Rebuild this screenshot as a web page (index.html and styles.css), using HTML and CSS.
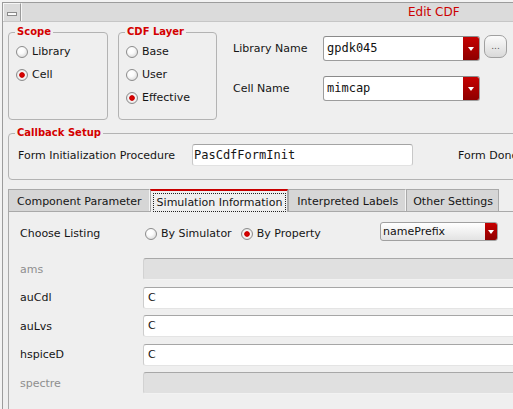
FILE: index.html
```html
<!DOCTYPE html>
<html>
<head>
<meta charset="utf-8">
<title>Edit CDF</title>
<link rel="stylesheet" href="styles.css">
</head>
<body>
<div class="window">
  <div class="titlebar">
    <div class="sysbtn"><span class="sysbar"></span></div>
    <div class="title">Edit CDF</div>
  </div>
  <div class="content">
    <div class="top">
      <fieldset class="group scope">
        <legend>Scope</legend>
        <div class="radio-list">
          <div class="radio-item"><span class="radio"></span>Library</div>
          <div class="radio-item"><span class="radio on"></span>Cell</div>
        </div>
      </fieldset>
      <fieldset class="group layer">
        <legend>CDF Layer</legend>
        <div class="radio-list">
          <div class="radio-item"><span class="radio"></span>Base</div>
          <div class="radio-item"><span class="radio"></span>User</div>
          <div class="radio-item"><span class="radio on"></span>Effective</div>
        </div>
      </fieldset>
      <div class="names">
        <div class="name-row">
          <span class="name-label">Library Name</span>
          <div class="combo"><span class="combo-text">gpdk045</span><span class="combo-btn"></span></div>
          <span class="dots">...</span>
        </div>
        <div class="name-row">
          <span class="name-label">Cell Name</span>
          <div class="combo"><span class="combo-text">mimcap</span><span class="combo-btn"></span></div>
        </div>
      </div>
    </div>

    <fieldset class="group callback">
      <legend>Callback Setup</legend>
      <div class="cb-row">
        <span class="cb-label">Form Initialization Procedure</span>
        <div class="cb-field">PasCdfFormInit</div>
        <span class="cb-label2">Form Done Procedure</span>
      </div>
    </fieldset>

    <div class="tabs">
      <div class="tab">Component Parameter</div>
      <div class="tab active"><span class="focus">Simulation Information</span></div>
      <div class="tab">Interpreted Labels</div>
      <div class="tab last">Other Settings</div>
    </div>

    <div class="panel">
      <div class="listing">
        <span class="listing-label">Choose Listing</span>
        <div class="radio-item inline"><span class="radio"></span>By Simulator</div>
        <div class="radio-item inline second"><span class="radio on"></span>By Property</div>
        <div class="combo small"><span class="combo-text sans">namePrefix</span><span class="combo-btn"></span></div>
      </div>
      <div class="props">
        <span class="prop-label disabled">ams</span>
        <div class="prop-field disabled"></div>
        <span class="prop-label">auCdl</span>
        <div class="prop-field">C</div>
        <span class="prop-label">auLvs</span>
        <div class="prop-field">C</div>
        <span class="prop-label">hspiceD</span>
        <div class="prop-field">C</div>
        <span class="prop-label disabled">spectre</span>
        <div class="prop-field disabled"></div>
      </div>
    </div>
  </div>
</div>
</body>
</html>
```

FILE: styles.css
```css
* { box-sizing: border-box; }

html, body {
  margin: 0;
  padding: 0;
}

body {
  width: 513px;
  height: 409px;
  overflow: hidden;
  background: #f3f3f3;
  font-family: "DejaVu Sans", sans-serif;
  font-size: 11px;
  color: #151515;
}

.window {
  margin: 2px 0 0 2px;
  width: 900px;
  height: 430px;
  border-left: 1px solid #9c9c9c;
  border-top: 1px solid #9c9c9c;
  background: #efefef;
}

/* title bar */
.titlebar {
  display: flex;
  height: 19px;
  background: #dbdbdb;
  border-bottom: 1px solid #c6c6c6;
}

.sysbtn {
  width: 18px;
  height: 18px;
  border-top: 1px solid #f6f6f6;
  border-left: 1px solid #f6f6f6;
  border-right: 1px solid #9a9a9a;
  display: flex;
  justify-content: center;
  padding-top: 8px;
}

.sysbar {
  width: 10px;
  height: 4px;
  border: 1px solid #8a8a8a;
  background: #fafafa;
}

.title {
  border-left: 1px solid #f6f6f6;
  padding-left: 386px;
  color: #cc0000;
  font-size: 12px;
  line-height: 19px;
}

/* main content */
.content {
  padding: 4px 0 0 5px;
}

.top {
  display: flex;
  align-items: flex-start;
}

.group {
  margin: 0;
  border: 1px solid #b3b3b3;
  border-radius: 4px;
  padding: 0 0 0 7px;
  min-width: 0;
}

.group legend {
  margin-left: -1px;
  padding: 0 2px;
  font-weight: bold;
  font-size: 10px;
  line-height: 12px;
  color: #d40000;
}

.group.scope {
  width: 100px;
  height: 94px;
}

.group.layer {
  width: 99px;
  height: 94px;
  margin-left: 10px;
}

.radio-list {
  padding-top: 2px;
}

.radio-item {
  display: flex;
  align-items: center;
  height: 23px;
}

.radio {
  flex: none;
  width: 12px;
  height: 12px;
  margin-right: 4px;
  border-radius: 50%;
  border: 1px solid #8c8c8c;
  background: radial-gradient(circle at 40% 35%, #ffffff 0, #fbfbfb 35%, #cfcfcf 100%);
}

.radio.on {
  background: radial-gradient(circle at 50% 50%, #e00000 0, #c80000 2.4px, #ffffff 3.2px, #f8f8f8 45%, #cfcfcf 100%);
}

/* library / cell names */
.names {
  margin-left: 16px;
  padding-top: 10px;
  display: flex;
  flex-direction: column;
  gap: 15px;
}

.name-row {
  display: flex;
  align-items: center;
  height: 25px;
}

.name-label {
  width: 90px;
}

.combo {
  display: flex;
  width: 157px;
  height: 25px;
  border: 1px solid #9c9c9c;
  border-top-color: #8a8a8a;
  border-radius: 3px;
  background: #ffffff;
  overflow: hidden;
}

.combo-text {
  flex: 1;
  padding-left: 3px;
  font-family: "DejaVu Sans Mono", monospace;
  font-size: 12px;
  line-height: 23px;
  color: #111;
}

.combo-text.sans {
  font-family: "DejaVu Sans", sans-serif;
  font-size: 11px;
  padding-left: 2px;
}

.combo-btn {
  flex: none;
  width: 16px;
  background: linear-gradient(#c60000, #8e0000);
  display: flex;
  align-items: center;
  justify-content: center;
}

.combo-btn::after {
  content: "";
  border-left: 3px solid transparent;
  border-right: 3px solid transparent;
  border-top: 4px solid #ffffff;
}

.dots {
  align-self: flex-start;
  margin-top: -1px;
  margin-left: 4px;
  width: 23px;
  height: 23px;
  border: 1px solid #a0a0a0;
  border-radius: 7px;
  background: linear-gradient(#fbfbfb, #d9d9d9);
  color: #555;
  font-size: 9px;
  line-height: 21px;
  text-align: center;
}

/* callback */
.group.callback {
  margin-top: 7px;
  width: 700px;
  padding: 5px 0 13px 7px;
}

.cb-row {
  display: flex;
  align-items: center;
}

.cb-label {
  width: 174px;
  margin-left: 2px;
}

.cb-field {
  width: 221px;
  height: 22px;
  border: 1px solid #c8c8c8;
  border-top-color: #a4a4a4;
  border-bottom-color: #e2e2e2;
  border-radius: 3px;
  background: #ffffff;
  padding-left: 1px;
  font-family: "DejaVu Sans Mono", monospace;
  font-size: 12px;
  line-height: 20px;
}

.cb-label2 {
  margin-left: 45px;
  white-space: nowrap;
}

/* tabs */
.tabs {
  position: relative;
  z-index: 1;
  display: flex;
  height: 22px;
  margin-top: 9px;
}

.tab {
  display: flex;
  align-items: center;
  height: 22px;
  padding: 2px 7px 0 8px;
  border: 1px solid #a9a9a9;
  border-bottom: none;
  border-right-color: #f4f4f4;
  background: #d6d6d6;
  white-space: nowrap;
}

.tab.last {
  padding: 2px 5px 0 6px;
  border-right-color: #a9a9a9;
}

.tab.active {
  height: 23px;
  padding: 1px 1px 0 2px;
  border-top: 2px solid #c80000;
  border-right-color: #a9a9a9;
  background: #efefef;
}

.focus {
  border: 1px dotted #222;
  padding: 1px 3px 1px 3px;
  line-height: 15px;
}

/* panel */
.panel {
  width: 700px;
  height: 220px;
  border-left: 1px solid #a9a9a9;
  border-top: 1px solid #a9a9a9;
  background: #efefef;
  padding: 10px 0 0 11px;
}

.listing {
  display: flex;
  align-items: center;
  width: 478px;
  height: 19px;
}

.listing-label {
  width: 125px;
  margin-top: 4px;
}

.radio-item.inline {
  height: 19px;
  margin-top: 4px;
}

.radio-item.second {
  margin-left: 9px;
}

.combo.small {
  margin-left: auto;
  width: 118px;
  height: 19px;
  background: linear-gradient(#ffffff, #e3e3e3);
  border-color: #a0a0a0;
}

.combo.small .combo-text {
  line-height: 17px;
}

.combo.small .combo-btn {
  width: 12px;
}

.props {
  display: grid;
  grid-template-columns: 123px 600px;
  row-gap: 6.5px;
  align-items: center;
  margin-top: 17px;
}

.prop-label {
  color: #151515;
}

.prop-label.disabled {
  color: #8e8e8e;
}

.prop-field {
  height: 22px;
  border: 1px solid #cdcdcd;
  border-top-color: #a6a6a6;
  border-bottom-color: #e4e4e4;
  border-radius: 3px;
  background: #ffffff;
  padding-left: 4px;
  line-height: 20px;
}

.prop-field.disabled {
  background: #e0e0e0;
  border-color: #d2d2d2;
  border-top-color: #a8a8a8;
  border-bottom-color: #f2f2f2;
}
```
